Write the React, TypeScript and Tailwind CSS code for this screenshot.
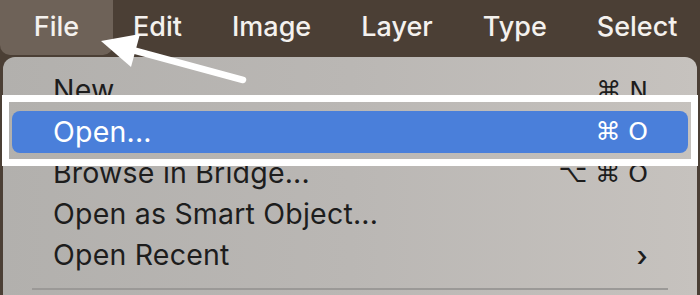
import React from 'react';

const menuBar = ['Edit', 'Image', 'Layer', 'Type', 'Select'];

function Row({ label, shortcut, arrow }: { label: string; shortcut?: string; arrow?: boolean }) {
  return (
    <div className="mx-[9px] flex h-[41px] items-center justify-between pl-[41px] pr-[40px] text-[#1d1d1d]">
      <span>{label}</span>
      {shortcut && <span className="font-['DejaVu_Sans',sans-serif] text-[25px] tracking-normal">{shortcut}</span>}
      {arrow && <span className="text-[28px] font-medium leading-none">›</span>}
    </div>
  );
}

export default function App() {
  return (
    <div className="relative h-[295px] w-[700px] overflow-hidden bg-[#4b3f35] font-['Inter',sans-serif] text-[27px]">
      <div className="flex h-[57px] items-start text-[#f4f1ee]">
        <div className="flex h-[55px] w-[113px] items-center justify-center rounded-br-[10px] rounded-bl-[10px] bg-[#6e6258] font-medium">
          File
        </div>
        <div className="flex h-[55px] items-center gap-[50px] pl-[20px] font-medium">
          {menuBar.map((m) => (
            <span key={m}>{m}</span>
          ))}
        </div>
      </div>

      <div className="mx-[3px] h-[260px] rounded-t-[12px] bg-gradient-to-r from-[#b2b0ad] via-[#bab7b4] to-[#c6c2be] pt-[13px] text-[28.5px] tracking-[0.2px]">
        <Row label="New" shortcut="⌘ N" />
        <div className="relative">
          <div className="absolute -top-[16px] -bottom-[13px] -left-[1px] -right-[1px] border-[7px] border-white" />
          <div className="relative mx-[9px] flex h-[42px] items-center justify-between rounded-[8px] bg-[#4a7fda] pl-[41px] pr-[40px] text-white">
            <span>Open...</span>
            <span className="font-['DejaVu_Sans',sans-serif] text-[25px] tracking-normal">⌘ O</span>
          </div>
        </div>
        <Row label="Browse in Bridge..." shortcut="⌥ ⌘ O" />
        <Row label="Open as Smart Object..." />
        <Row label="Open Recent" arrow />
        <div className="mx-[29px] mt-[12px] h-[2px] bg-[#9b9997]" />
      </div>

      <svg className="pointer-events-none absolute left-0 top-0" width="700" height="295" viewBox="0 0 700 295">
        <line x1="243" y1="80" x2="125" y2="48" stroke="white" strokeWidth="6.5" strokeLinecap="round" />
        <polygon points="101,41 140,34 131,67" fill="white" />
      </svg>
    </div>
  );
}
